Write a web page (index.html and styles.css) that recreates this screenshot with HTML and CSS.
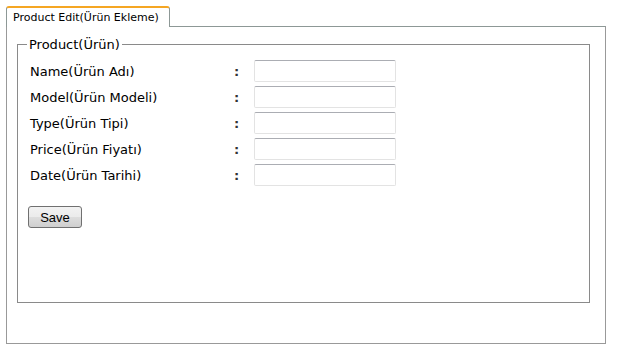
FILE: index.html
```html
<!DOCTYPE html>
<html>

<head>
    <link rel="stylesheet" href="styles.css">
</head>

<body>
    <div class="tabs">
        <div class="tab">Product Edit(Ürün Ekleme)</div>
    </div>

    <div class="panel">
        <fieldset class="product">
            <legend>Product(Ürün)</legend>

            <div class="row">
                <label for="name">Name(Ürün Adı)</label>
                <span class="colon">:</span>
                <input type="text" id="name">
            </div>
            <div class="row">
                <label for="model">Model(Ürün Modeli)</label>
                <span class="colon">:</span>
                <input type="text" id="model">
            </div>
            <div class="row">
                <label for="type">Type(Ürün Tipi)</label>
                <span class="colon">:</span>
                <input type="text" id="type">
            </div>
            <div class="row">
                <label for="price">Price(Ürün Fiyatı)</label>
                <span class="colon">:</span>
                <input type="text" id="price">
            </div>
            <div class="row">
                <label for="date">Date(Ürün Tarihi)</label>
                <span class="colon">:</span>
                <input type="text" id="date">
            </div>

            <button id="save">Save</button>
        </fieldset>
    </div>
</body>

</html>
```

FILE: styles.css
```css
body {
    margin: 0;
    padding: 6px;
    background: #fff;
    font-family: 'DejaVu Sans', Verdana, sans-serif;
    color: #000;
}

.tabs {
    display: flex;
    height: 20px;
}

.tab {
    width: 156px;
    height: 19px;
    padding-left: 6px;
    border: 1px solid #8d9896;
    border-top: 2px solid #f5a623;
    border-bottom: none;
    border-radius: 3px 3px 0 0;
    background: #fff;
    font-size: 11px;
    line-height: 19px;
}

.panel {
    width: 600px;
    height: 318px;
    border: 1px solid #999;
    border-top-color: #8d9896;
    padding: 10px 15px 0 10px;
    box-sizing: border-box;
}

.product {
    margin: 0;
    padding: 8px 12px 0 12px;
    height: 266px;
    border: 1px solid #8a8a8a;
    box-sizing: border-box;
    font-size: 13px;
}

.product legend {
    padding: 0 2px;
    margin-left: -3px;
}

.row {
    display: grid;
    grid-template-columns: 204px 20px 142px;
    align-items: center;
    height: 22px;
    margin-bottom: 4px;
}

.colon {
    font-weight: bold;
    color: #333;
}

input {
    width: 142px;
    height: 22px;
    margin: 0;
    padding: 2px 4px;
    border: 1px solid #e3e3e3;
    border-top-color: #abadb3;
    border-radius: 2px;
    box-sizing: border-box;
}

#save {
    margin: 16px 0 0 -2px;
    width: 54px;
    height: 22px;
    padding: 0;
    font-family: 'Liberation Sans', Arial, sans-serif;
    font-size: 13px;
    color: #000;
    border: 1px solid #707070;
    border-radius: 3px;
    background: linear-gradient(#f2f2f2 0%, #ebebeb 50%, #dddddd 51%, #cfcfcf 100%);
}
```
